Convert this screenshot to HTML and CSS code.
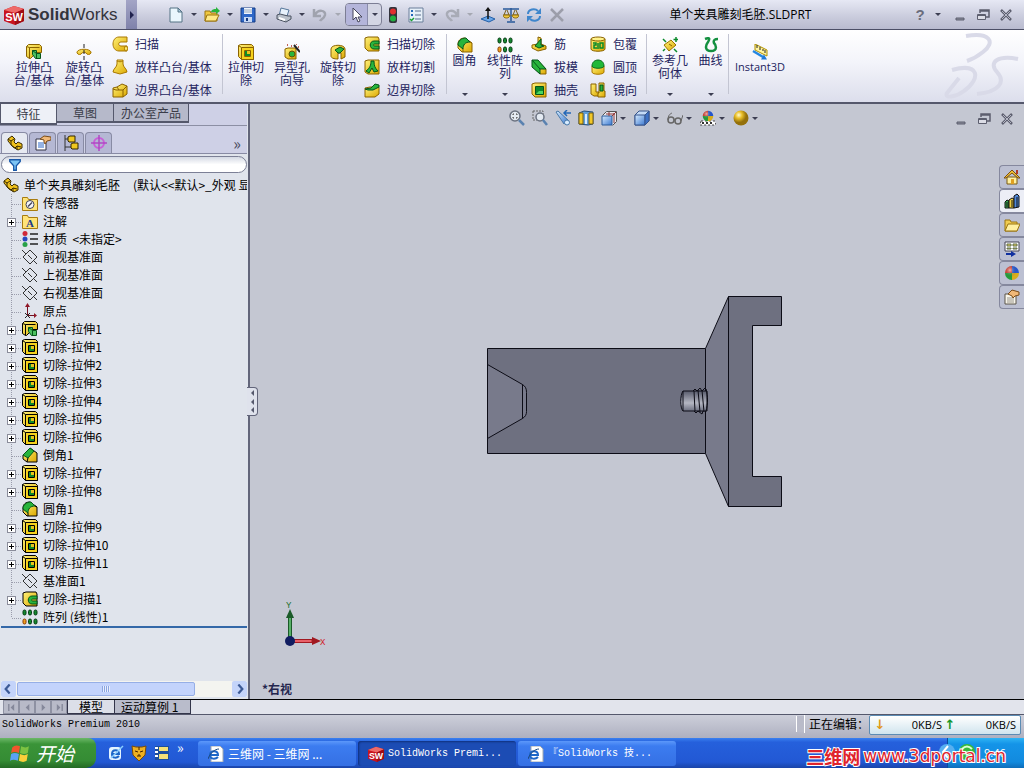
FILE: index.html
```html
<!DOCTYPE html>
<html lang="zh-CN">
<head>
<meta charset="utf-8">
<meta name="viewport" content="width=device-width, initial-scale=1">
<title>SolidWorks - 单个夹具雕刻毛胚.SLDPRT</title>
<link rel="stylesheet" href="styles.css">
</head>
<body>
<svg class="defs" aria-hidden="true">
<defs>
<linearGradient id="gy" x1="0" y1="0" x2="1" y2="1"><stop offset="0" stop-color="#fff27a"/><stop offset="1" stop-color="#dca800"/></linearGradient>
<linearGradient id="gb" x1="0" y1="0" x2="1" y2="1"><stop offset="0" stop-color="#d8ecff"/><stop offset="1" stop-color="#3a78d0"/></linearGradient>
<linearGradient id="gs" x1="0" y1="0" x2="0" y2="1"><stop offset="0" stop-color="#585b6c"/><stop offset=".6" stop-color="#b4b6c2"/><stop offset="1" stop-color="#6c6f80"/></linearGradient>
<radialGradient id="gball" cx=".35" cy=".3"><stop offset="0" stop-color="#fffbd0"/><stop offset=".45" stop-color="#eabf28"/><stop offset="1" stop-color="#94700a"/></radialGradient>
<radialGradient id="gshade" cx=".35" cy=".3"><stop offset="0" stop-color="#fff" stop-opacity=".6"/><stop offset="1" stop-color="#000" stop-opacity=".1"/></radialGradient>
</defs>
<symbol id="boss" viewBox="0 0 16 16"><path d="M.5 2.500l2-2h11l2 2v6h-5l-6 6h-1l-3-2z" fill="url(#gy)" stroke="currentColor"/><path d="M.5 2.500l3 1h10M3.500 3.500v11" fill="none" stroke="currentColor"/><path d="M6.500 6.500h4v3h4v5h-5l-3-4z" fill="#4cc060" stroke="#05551a"/><path d="M10.500 14.500v-5M6.500 6.500l4 3" stroke="#05551a"/></symbol>
<symbol id="cut" viewBox="0 0 16 16"><path d="M.5 1.500l2-1h11l2 2v13h-12l-3-3z" fill="url(#gy)" stroke="currentColor"/><path d="M3.500 3.500h12v12h-12zM.5 1.500l3 2" fill="#f6d21c" stroke="currentColor"/><path d="M6.500 6.500h6v6h-6z" fill="#fff6b0" stroke="currentColor"/><path d="M9 7h3v3H9z" fill="#e8c41c"/><path d="M7 10h5v2H7zM7 7h2v3H7z" fill="#108a28"/></symbol>
<symbol id="revolve" viewBox="0 0 16 16"><path d="M1 9c-1-5 15-5 14 0-1 2-4 2-5 0-1-1-3-1-4 0-1 2-4 2-5 0z" fill="url(#gy)" stroke="#a87700"/><path d="M8 0v4M8 6v4M8 12v4" stroke="#222"/></symbol>
<symbol id="sweep" viewBox="0 0 16 16"><path d="M15 1v5H9c-3 0-3 4 0 4h6v5H7C-1 15-1 1 7 1z" fill="url(#gy)" stroke="#a87700"/><ellipse cx="14" cy="12.500" rx="1.500" ry="2.500" fill="#ffec70" stroke="#a87700"/></symbol>
<symbol id="loft" viewBox="0 0 16 16"><path d="M5 1h6v4c0 3 4 5 4 8l-7 2-7-2c0-3 4-5 4-8z" fill="url(#gy)" stroke="#a87700"/><path d="M5 2c2 1 4 1 6 0" fill="none" stroke="#a87700"/></symbol>
<symbol id="bound" viewBox="0 0 16 16"><path d="M1 6l4-1 5-3 5 2v8l-4 3H1z" fill="url(#gy)" stroke="#8a6200"/><path d="M1 7l3 1h7l4-4M11 8v7M5 5l2 3" fill="none" stroke="#8a6200"/></symbol>
<symbol id="hole" viewBox="0 0 16 16"><path d="M1 5l3-1h8v11H4l-3-2z" fill="url(#gy)" stroke="#8a6200"/><circle cx="8" cy="10" r="3" fill="#28b43c" stroke="#6a5000"/><path d="M10 1l6 7" stroke="#222" stroke-width="2"/><path d="M3 1h1M7 2h1M12 0h1M14 3h1" stroke="#b03020" stroke-width="1.500"/></symbol>
<symbol id="revcut" viewBox="0 0 16 16"><path d="M1 5c0-5 14-5 14 0v8l-4 2V9H8v6c-4 0-7-1-7-3z" fill="url(#gy)" stroke="#8a6200"/><path d="M5 6l5-3 4 2-4 4-2 0z" fill="#28b43c" stroke="#05551a"/></symbol>
<symbol id="sweepcut" viewBox="0 0 16 16"><path d="M1 2l3-1h10l1 2v12H4l-3-3z" fill="url(#gy)" stroke="currentColor"/><path d="M15 5h-5c-5 0-5 8 0 8h5v-3h-4c-2 0-2-2 0-2h4z" fill="#28b43c" stroke="#05551a"/></symbol>
<symbol id="loftcut" viewBox="0 0 16 16"><path d="M1 2l3-1h11v14H4l-3-2z" fill="url(#gy)" stroke="#8a6200"/><path d="M7 2h3c0 5 1 7 4 10l-4 1-2-4-3 5-3-2c4-3 5-6 5-10z" fill="#28b43c" stroke="#05551a"/></symbol>
<symbol id="boundcut" viewBox="0 0 16 16"><path d="M1 6l5-1h9v7l-4 3H1z" fill="url(#gy)" stroke="#8a6200"/><path d="M1 7l6-1 4-4 4 1v2l-6 3H4z" fill="#28b43c" stroke="#05551a"/></symbol>
<symbol id="fillet" viewBox="0 0 16 16"><path d="M1 7c0-4 3-6 7-6l7 5v9H5l-4-4z" fill="url(#gy)" stroke="currentColor"/><path d="M1 8c0-4 3-7 8-7l4 4C8 5 6 8 6 12z" fill="#28b43c" stroke="#05551a"/><path d="M6 12v3M13 5l2 1" stroke="currentColor"/></symbol>
<symbol id="chamfer" viewBox="0 0 16 16"><path d="M1 8l7-7 7 5v9H5l-4-3z" fill="url(#gy)" stroke="currentColor"/><path d="M1 8l7-7 4 3-6 7z" fill="#28b43c" stroke="#05551a"/><path d="M6 11l-1 4" stroke="currentColor"/></symbol>
<symbol id="pattern" viewBox="0 0 16 16"><g fill="#148a30" stroke="#053a12"><rect x="1" y="1" width="3" height="5" rx="1.500"/><rect x="6.500" y="1" width="3" height="5" rx="1.500"/><rect x="12" y="1" width="3" height="5" rx="1.500"/><rect x="6.500" y="10" width="3" height="5" rx="1.500"/><rect x="12" y="10" width="3" height="5" rx="1.500"/></g><rect x="1" y="10" width="3" height="5" rx="1.500" fill="#f0a020" stroke="#8a3a00"/></symbol>
<symbol id="rib" viewBox="0 0 16 16"><path d="M1 9l6-1V1l3 1v6l5 2v3l-8 2-6-3z" fill="url(#gy)" stroke="#8a6200"/><path d="M4 10l6-7v6l3 1-5 2z" fill="#28b43c" stroke="#05551a"/></symbol>
<symbol id="draft" viewBox="0 0 16 16"><path d="M8 3l7 7v5H9l-4-4z" fill="url(#gy)" stroke="#8a6200"/><path d="M1 1h6l8 9H9v5L1 8z" fill="#28b43c" stroke="#05551a"/><path d="M1 1l8 9" stroke="#05551a"/></symbol>
<symbol id="shell" viewBox="0 0 16 16"><path d="M1 2l3-1h11v14H4l-3-3z" fill="url(#gy)" stroke="#8a6200"/><path d="M4.500 4.500h8v8h-8z" fill="#0b8a2c" stroke="#05551a"/><path d="M5 12l3-3h4v3z" fill="#4ad860"/></symbol>
<symbol id="wrap" viewBox="0 0 16 16"><path d="M1 3v10c0 3 14 3 14 0V3z" fill="url(#gy)" stroke="#8a6200"/><ellipse cx="8" cy="3" rx="7" ry="2" fill="#fff28a" stroke="#8a6200"/><path d="M3 7h3v2H4v3h3M8 13V7M10 7h3v5h-3z" fill="none" stroke="#0a8a2a" stroke-width="1.500"/></symbol>
<symbol id="dome" viewBox="0 0 16 16"><path d="M2 7v6c0 3 12 3 12 0V7z" fill="url(#gy)" stroke="#a87700"/><path d="M2 7c0-8 12-8 12 0 0 3-12 3-12 0z" fill="#22b838" stroke="#0a6a1e"/></symbol>
<symbol id="mirror" viewBox="0 0 16 16"><path d="M1 2h5v8h3v4H4l-3-2z" fill="url(#gy)" stroke="#8a6200"/><path d="M9 1h5v8h1v6H8v-4h1z" fill="url(#gy)" stroke="#8a6200"/><path d="M10 3h3v6h-3z" fill="#28b43c" stroke="#05551a"/></symbol>
<symbol id="refgeo" viewBox="0 0 16 16"><path d="M2 8l7-5 5 5-7 6z" fill="url(#gy)" stroke="#9a7400"/><path d="M1 2l3 3M14 0v5M11.500 2.500h5M15 15l-3-3M1 14l2-2" stroke="#0a8a2a" stroke-width="1.500"/><path d="M7 7l3 2" stroke="#8a6200"/></symbol>
<symbol id="curve" viewBox="0 0 16 16"><path d="M2 2c5-2 5 0 3 3-3 4-3 9 3 9 7 0 5-6 3-8-1-3 1-4 4-4" fill="none" stroke="#149040" stroke-width="2.500"/></symbol>
<symbol id="instant" viewBox="0 0 16 16"><path d="M3 0l12 6v6L3 6z" fill="#fff4a0" stroke="#b09000"/><path d="M5 1v3M8 3v3M11 5v2M13 6v3" stroke="#222"/><path d="M1 7l10 6" stroke="#2486e0" stroke-width="2.500"/><path d="M15 15.500l-6 0 3-5z" fill="#1e78d8"/></symbol>
<symbol id="new" viewBox="0 0 16 16"><path d="M2 1h8l4 4v10H2z" fill="#eaf6fd" stroke="#557284"/><path d="M10 1v4h4z" fill="#a7c8dc" stroke="#557284"/></symbol>
<symbol id="open" viewBox="0 0 16 16"><path d="M1 4h5l1 2h6v8H1z" fill="#f0c840" stroke="#9a7410"/><path d="M3 8h12l-3 6H1z" fill="#ffe986" stroke="#9a7410"/><path d="M7 5c1-3 3-3 5-3V0l4 4-4 3V5c-2 0-3 0-5 0z" fill="#28b43c"/></symbol>
<symbol id="save" viewBox="0 0 16 16"><path d="M1 1h14v14H1z" fill="#2f68c8" stroke="#143c86"/><path d="M4 1h8v6H4z" fill="#eef4ff"/><path d="M4 10h8v5H4z" fill="#c6d8f4"/><path d="M6 11h2v3H6z" fill="#163a80"/><path d="M4 3h8M4 5h8" stroke="#9ab"/></symbol>
<symbol id="print" viewBox="0 0 16 16"><path d="M5 1l8 2-2 6H3z" fill="#e8f2fc" stroke="#56779a"/><path d="M1 8l3-1 8 2 3 0v3l-5 3-9-3z" fill="#b9c0ca" stroke="#4a5260"/><path d="M3 11l6 2" stroke="#fff" stroke-width="2"/></symbol>
<symbol id="undo" viewBox="0 0 16 16"><path d="M3 8c3-6 11-5 10 0-1 4-4 4-5 6M2 2v7h7" fill="none" stroke="#a0a3ae" stroke-width="2.500"/></symbol>
<symbol id="redo" viewBox="0 0 16 16"><path d="M13 8C10 2 2 3 3 8c1 4 4 4 5 6M14 2v7H7" fill="none" stroke="#a8abb6" stroke-width="2.500"/></symbol>
<symbol id="arrow" viewBox="0 0 16 16"><path d="M4 1v12l3-3 2 5 2-1-2-4h4z" fill="#fff" stroke="#45455a"/></symbol>
<symbol id="light" viewBox="0 0 16 16"><rect x="4" y="0" width="8" height="16" rx="2" fill="#33333b"/><circle cx="8" cy="4.500" r="3" fill="#e03030"/><circle cx="8" cy="11.500" r="3" fill="#20b040"/></symbol>
<symbol id="list" viewBox="0 0 16 16"><path d="M1 1h14v14H1z" fill="#e6eff8" stroke="#6a7e9a"/><path d="M7 4h6M7 8h6M7 12h6" stroke="#5a7090"/><path d="M3 4h2M3 8h2" stroke="#2468b8" stroke-width="2"/><path d="M2 12l1.500 1.500L6 11" fill="none" stroke="#18a030" stroke-width="1.500"/></symbol>
<symbol id="origin" viewBox="0 0 16 16"><path d="M1 12l7-3 7 3-6 3z" fill="#6aa6e8" stroke="#2460a8"/><path d="M8 12V2" stroke="#111" stroke-width="1.500"/><path d="M8 0l3 4H5z" fill="#111"/></symbol>
<symbol id="scale" viewBox="0 0 16 16"><path d="M0 2h16M8 1v13M4 15h8" stroke="#2a5a9a" stroke-width="1.500"/><path d="M3 3L1 8h5L4 3M12 3l-2 5h5l-2-5" fill="none" stroke="#7a6020"/><path d="M0 8h7c0 4-7 4-7 0zM9 8h7c0 4-7 4-7 0z" fill="#f2c83a" stroke="#8a6a10"/></symbol>
<symbol id="rebuild" viewBox="0 0 16 16"><path d="M2 7c0-5 7-6 10-3M14 9c0 5-7 6-10 3" fill="none" stroke="#3f86cc" stroke-width="2"/><path d="M15 1v6H9zM1 15V9h6z" fill="#3f86cc"/></symbol>
<symbol id="x" viewBox="0 0 16 16"><path d="M2 2l12 12M14 2L2 14" stroke="currentColor" stroke-width="2.500"/></symbol>
<symbol id="wmin" viewBox="0 0 16 16"><path d="M4 11h8v2H4z" fill="#8a8c9a" stroke="#5c5e6e"/></symbol>
<symbol id="wrest" viewBox="0 0 16 16"><path d="M5 6V3h9v7h-3M5 4h9" fill="none" stroke="#5c5e6e" stroke-width="1.500"/><path d="M2.500 7.500h8v5h-8zM2 8.500h9" fill="#dcdde6" stroke="#5c5e6e"/></symbol>
<symbol id="wx" viewBox="0 0 16 16"><path d="M3 3l10 10M13 3L3 13" stroke="#5c5e6e" stroke-width="2.500"/><path d="M4 4l8 8M12 4l-8 8" stroke="#b4b6c4"/></symbol>
<symbol id="part" viewBox="0 0 16 16"><path d="M1 4l4-3 3 3-1 3 2 2 2-2 4 2v4l-4 2-5-3-5-6z" fill="#eec01c" stroke="#3c2c00"/><path d="M1 4l3 2 3-2M4 6v4l4 3 2-2 4 1M10 11v4" fill="none" stroke="#3c2c00"/></symbol>
<symbol id="props" viewBox="0 0 16 16"><path d="M1 4h10v11H1z" fill="#fff" stroke="#334"/><path d="M3 8h6M3 10h6M3 12h6" stroke="#2a66c8"/><path d="M5 4l4-3 7 1v3l-4 1-2 3-1-2 0-2z" fill="#f0b878" stroke="#7a4c18"/></symbol>
<symbol id="custom" viewBox="0 0 16 16"><path d="M1 5h11v10H1z" fill="#f8f6ec" stroke="#5a5448"/><path d="M3 9h7M3 11h7M3 13h7" stroke="#9a968c"/><path d="M4 5l4-4 7 2v3l-4 1-2 2-1-2z" fill="#f0b878" stroke="#7a4c18"/></symbol>
<symbol id="config" viewBox="0 0 16 16"><path d="M2 0v16M2 4h4M2 12h7" stroke="#333"/><path d="M5 2l2-1h5v6H6L5 6zM8 9l2-1h5v6H9l-1-1z" fill="#f0c820" stroke="#332600"/></symbol>
<symbol id="target" viewBox="0 0 16 16"><circle cx="8" cy="8" r="5" fill="none" stroke="#c860d8" stroke-width="2"/><path d="M8 0v16M0 8h16" stroke="#b048c4" stroke-width="1.500"/></symbol>
<symbol id="funnel" viewBox="0 0 16 16"><path d="M2 2h12v2L9.500 9v5h-3V9L2 4z" fill="#7cc4f4" stroke="#1858a8" stroke-width="1.500"/></symbol>
<symbol id="sensor" viewBox="0 0 16 16"><path d="M.5 2.500h5l1 2h9v11H.500z" fill="#ffe478" stroke="#a87c10"/><circle cx="8" cy="9.500" r="4" fill="#f4f6fa" stroke="#445"/><path d="M6 11.500l4-4" stroke="#445" stroke-width="1.500"/></symbol>
<symbol id="note" viewBox="0 0 16 16"><path d="M.5 2.500h5l1 2h9v11H.500z" fill="#ffe478" stroke="#a87c10"/><text x="8" y="14" class="glyph-a">A</text></symbol>
<symbol id="material" viewBox="0 0 16 16"><circle cx="3" cy="2.500" r="2.500" fill="#d02838"/><circle cx="3" cy="8" r="2.500" fill="#2848c0"/><circle cx="3" cy="13.500" r="2.500" fill="#28a048"/><path d="M8 3h8M8 8h8M8 13h8" stroke="#222" stroke-width="1.500"/></symbol>
<symbol id="plane" viewBox="0 0 16 16"><path d="M1 8l7-7 7 7-7 7zM0 1l4 4M12 12l3 3M6 6l4 4" fill="none" stroke="#333"/></symbol>
<symbol id="orig" viewBox="0 0 16 16"><path d="M5.500 12V3M5 12.500h8" stroke="#701020" fill="none"/><path d="M3 10l5 5M8 10l-5 5" stroke="#222"/><path d="M5.500 0l2.500 4H3zM15 12.500L12 10v5z" fill="#901828"/></symbol>
<symbol id="house" viewBox="0 0 16 16"><path d="M3 8h10v7H3z" fill="#fff0a0" stroke="#7a5a10"/><path d="M0 9l8-8 8 8-2 0-6-5-6 5z" fill="#f4c238" stroke="#7a5010"/><path d="M7 10h3v5H7z" fill="#e0a020"/><path d="M12 1h2v4h-2z" fill="#b03828"/></symbol>
<symbol id="books" viewBox="0 0 16 16"><path d="M1 9l2-2 2 1v7H1z" fill="#38a850" stroke="#111"/><path d="M5 7l3-2 2 1v9H5z" fill="#f0d040" stroke="#111"/><path d="M10 3l3-2 2 2v11l-5 1z" fill="#5088d8" stroke="#111"/><path d="M3 9v5M8 7v7M13 4v10" stroke="#111"/></symbol>
<symbol id="folder" viewBox="0 0 16 16"><path d="M1 3h5l1 2h6v9H1z" fill="#f0cc50" stroke="#9a7410"/><path d="M4 7h12l-3 7H1z" fill="#fff0a0" stroke="#9a7410"/></symbol>
<symbol id="palette" viewBox="0 0 16 16"><path d="M1 1h14v9H1z" fill="#fff" stroke="#445"/><path d="M3 3h4v2H3zM9 3h4v2H9zM3 7h4v1H3zM9 7h4v1H9z" fill="#f0d860" stroke="#5a6a4a"/><path d="M2 13h6" stroke="#1030a0" stroke-width="2"/><path d="M7 10l5 3-5 3z" fill="#1030a0"/></symbol>
<symbol id="rgb" viewBox="0 0 16 16"><path d="M8 8V1a7 7 0 0 1 7 7z" fill="#2860e8"/><path d="M8 8h7a7 7 0 0 1-7 7z" fill="#f0c020"/><path d="M8 8v7a7 7 0 0 1-7-7z" fill="#28b040"/><path d="M8 8H1a7 7 0 0 1 7-7z" fill="#f03828"/><circle cx="8" cy="8" r="7" fill="url(#gshade)"/></symbol>
<symbol id="scene" viewBox="0 0 16 16"><path d="M1 11h14l1 4H0z" fill="#fff" stroke="#444" stroke-dasharray="2 2"/><path d="M2 13h12" stroke="#333" stroke-width="2" stroke-dasharray="2 2"/><use href="#rgb" x="2" y="0" width="12" height="12"/></symbol>
<symbol id="ball" viewBox="0 0 16 16"><circle cx="8" cy="8" r="7.500" fill="url(#gball)"/></symbol>
<symbol id="zoomfit" viewBox="0 0 16 16"><circle cx="6" cy="6" r="5" fill="#e4eaf2" stroke="#6b7280" stroke-width="1.500"/><path d="M4 5V4h1M7 4h1v1M4 7v1h1M7 8h1V7" stroke="#444" fill="none"/><path d="M10 10l5 5" stroke="#5a82b0" stroke-width="2.500"/></symbol>
<symbol id="zoomarea" viewBox="0 0 16 16"><path d="M1 1h10v9H1z" fill="none" stroke="#666" stroke-dasharray="2 1"/><circle cx="8" cy="7" r="4" fill="#e4eaf2" stroke="#6b7280" stroke-width="1.500"/><path d="M11 10l4 5" stroke="#5a82b0" stroke-width="2.500"/></symbol>
<symbol id="prev" viewBox="0 0 16 16"><path d="M1 2l2-1 10 9-4 4z" fill="url(#gb)" stroke="#4878a8"/><circle cx="12" cy="12.500" r="2.500" fill="#d8ecff" stroke="#4878a8"/><path d="M16 3h-6M12 0L9 3l3 3" fill="none" stroke="#2468b8" stroke-width="1.500"/></symbol>
<symbol id="section" viewBox="0 0 16 16"><path d="M1 3l5-2 9 1v12l-5 1-9-1z" fill="#5e9ed8" stroke="#27517c"/><path d="M1 3h4v11H1zM11 3h4v11h-4z" fill="#f2c828" stroke="#7a6010"/><path d="M7 4h2v10H7z" fill="#d8ecff"/></symbol>
<symbol id="views" viewBox="0 0 16 16"><path d="M1.500 5.500l4-4h10v10l-4 4" fill="#e6e8ee" stroke="#555"/><path d="M1 6h10v9H1z" fill="url(#gb)" stroke="#2a5a9a"/><path d="M11 6l4-4M8 2v4M5 4h9M13 3v10" stroke="#903838"/></symbol>
<symbol id="cube" viewBox="0 0 16 16"><path d="M1 5l4-4h10v10l-4 4H1z" fill="#c4daf6" stroke="#36558c"/><path d="M1 5h10v10H1z" fill="url(#gb)" stroke="#36558c"/><path d="M11 5l4-4v10l-4 4z" fill="#3c70c4" stroke="#36558c"/></symbol>
<symbol id="glasses" viewBox="0 0 16 16"><circle cx="4" cy="10" r="3" fill="none" stroke="#666" stroke-width="1.500"/><circle cx="11" cy="11" r="3" fill="none" stroke="#666" stroke-width="1.500"/><path d="M1 10c0-5 2-6 4-7M14 11l2-6M7 10h1" fill="none" stroke="#666"/></symbol>
<symbol id="ie" viewBox="0 0 16 16"><path d="M3 0h9l3 3v13H3z" fill="#fff" stroke="#a0a8b0"/><path d="M2 9h8c0-5-8-5-8 0s6 4 8 2" fill="none" stroke="#1c66c8" stroke-width="2"/><path d="M0 13C2 7 7 3 11 3" fill="none" stroke="#1c4880"/></symbol>
<symbol id="ie2" viewBox="0 0 16 16"><rect x="1" y="2" width="12" height="13" rx="3" fill="#e4f4ff"/><path d="M4 9h7c0-5-7-5-7 0s5 4 7 2" fill="none" stroke="#1c66c8" stroke-width="2"/><path d="M3 13L15 1" stroke="#8ad0ff" stroke-width="1.500"/></symbol>
<symbol id="tiger" viewBox="0 0 16 16"><path d="M1 1l4 1h6l4-1-1 9-6 6-6-6z" fill="#eeb022" stroke="#7a4a08"/><path d="M4 6l3 1M12 6L9 7M8 2v3M6 11h4M8 9v2" stroke="#402000"/></symbol>
<symbol id="desk" viewBox="0 0 16 16"><path d="M1 1h14v14H1z" fill="#1c4e9c"/><path d="M5 2h9v4H5zM5 9h9v5H5z" fill="#f4e078"/><path d="M1 3h3M1 7h3M1 11h3" stroke="#fff" stroke-width="2"/></symbol>
<symbol id="flag" viewBox="0 0 18 16"><path d="M2 3q3-3 7-1L8 8Q4 6 1 8z" fill="#f0562c"/><path d="M10 2q4 2 7 0l-1 6q-3 2-7 0z" fill="#7cc242"/><path d="M1 9q3-2 7 0l-1 6q-4-2-7 0z" fill="#5aa2f4"/><path d="M9 9q4 2 7 0l-1 6q-3 2-7 0z" fill="#fbcf3a"/></symbol>
<symbol id="sw" viewBox="0 0 20 20"><path d="M0 5l10-4 10 3v12l-9 4-11-4z" fill="#c8141e"/><path d="M0 5l10-4 10 3-9 4z" fill="#ee6a68"/><path d="M11 8l9-4v12l-9 4z" fill="#a00c16"/><text x="10" y="16" class="glyph-sw">SW</text></symbol>
</svg>

<header class="titlebar">
  <div class="brand"><svg class="brand-mark"><use href="#sw"/></svg><span><b>Solid</b>Works</span></div>
  <button class="brand-menu" aria-label="菜单"><i class="tri-right"></i></button>
  <nav class="quick" aria-label="标准">
    <button aria-label="新建"><svg class="ic"><use href="#new"/></svg></button><button class="dd" aria-label="新建选项"></button>
    <button aria-label="打开"><svg class="ic"><use href="#open"/></svg></button><button class="dd" aria-label="打开选项"></button>
    <button aria-label="保存"><svg class="ic"><use href="#save"/></svg></button><button class="dd" aria-label="保存选项"></button>
    <button aria-label="打印"><svg class="ic"><use href="#print"/></svg></button><button class="dd" aria-label="打印选项"></button>
    <button aria-label="撤销" disabled><svg class="ic"><use href="#undo"/></svg></button><button class="dd dim" aria-label="撤销选项"></button>
    <span class="picker"><button class="pick" aria-label="选择"><svg class="ic"><use href="#arrow"/></svg></button><button class="dd" aria-label="选择选项"></button></span>
    <button class="spaced" aria-label="重建模型"><svg class="ic"><use href="#light"/></svg></button>
    <button class="spaced" aria-label="选项"><svg class="ic"><use href="#list"/></svg></button><button class="dd" aria-label="更多选项"></button>
    <button aria-label="重做" disabled><svg class="ic"><use href="#redo"/></svg></button><button class="dd dim" aria-label="重做选项"></button>
    <button aria-label="原点"><svg class="ic"><use href="#origin"/></svg></button>
    <button class="spaced" aria-label="测量"><svg class="ic"><use href="#scale"/></svg></button>
    <button class="spaced" aria-label="刷新"><svg class="ic"><use href="#rebuild"/></svg></button>
    <button class="spaced gray" aria-label="取消"><svg class="ic"><use href="#x"/></svg></button>
  </nav>
  <h1 class="doc">单个夹具雕刻毛胚.SLDPRT</h1>
  <div class="wctl">
    <button class="help" aria-label="帮助">?</button><button class="dd" aria-label="帮助选项"></button>
    <button aria-label="最小化"><svg class="ic"><use href="#wmin"/></svg></button>
    <button aria-label="还原"><svg class="ic"><use href="#wrest"/></svg></button>
    <button aria-label="关闭"><svg class="ic"><use href="#wx"/></svg></button>
  </div>
</header>

<section class="ribbon" aria-label="特征工具">
  <div class="group g1">
    <button class="big wide low"><svg class="ic"><use href="#boss"/></svg><span>拉伸凸<br>台/基体</span></button>
    <button class="big wide low"><svg class="ic"><use href="#revolve"/></svg><span>旋转凸<br>台/基体</span></button>
    <div class="stack s1">
      <button><svg class="ic"><use href="#sweep"/></svg>扫描</button>
      <button><svg class="ic"><use href="#loft"/></svg>放样凸台/基体</button>
      <button><svg class="ic"><use href="#bound"/></svg>边界凸台/基体</button>
    </div>
  </div>
  <div class="group">
    <button class="big low"><svg class="ic"><use href="#cut"/></svg><span>拉伸切<br>除</span></button>
    <button class="big low"><svg class="ic"><use href="#hole"/></svg><span>异型孔<br>向导</span></button>
    <button class="big low"><svg class="ic"><use href="#revcut"/></svg><span>旋转切<br>除</span></button>
    <div class="stack s2">
      <button><svg class="ic"><use href="#sweepcut"/></svg>扫描切除</button>
      <button><svg class="ic"><use href="#loftcut"/></svg>放样切割</button>
      <button><svg class="ic"><use href="#boundcut"/></svg>边界切除</button>
    </div>
  </div>
  <div class="group">
    <button class="big slim"><svg class="ic"><use href="#fillet"/></svg><span>圆角</span><i class="tri"></i></button>
    <button class="big"><svg class="ic"><use href="#pattern"/></svg><span>线性阵<br>列</span><i class="tri"></i></button>
    <div class="stack s3">
      <button><svg class="ic"><use href="#rib"/></svg>筋</button>
      <button><svg class="ic"><use href="#draft"/></svg>拔模</button>
      <button><svg class="ic"><use href="#shell"/></svg>抽壳</button>
    </div>
    <div class="stack s3">
      <button><svg class="ic"><use href="#wrap"/></svg>包覆</button>
      <button><svg class="ic"><use href="#dome"/></svg>圆顶</button>
      <button><svg class="ic"><use href="#mirror"/></svg>镜向</button>
    </div>
  </div>
  <div class="group">
    <button class="big"><svg class="ic"><use href="#refgeo"/></svg><span>参考几<br>何体</span><i class="tri"></i></button>
    <button class="big slim"><svg class="ic"><use href="#curve"/></svg><span>曲线</span><i class="tri"></i></button>
  </div>
  <div class="group last">
    <button class="big instant low"><svg class="ic"><use href="#instant"/></svg><span>Instant3D</span></button>
  </div>
  <svg class="ds" viewBox="0 0 80 68" aria-hidden="true"><path d="M22 4c24-4 30 6 17 16-5 4-10 7-16 9M8 38c28-8 29 9 12 21-8 6-20 8-17 2l12-15M74 27c-20-4-30 3-21 13s2 20-20 22" fill="none" stroke="#d9dae8" stroke-width="4"/></svg>
</section>

<main class="work">
  <aside class="side">
    <div class="cmdtabs" role="tablist">
      <button class="on" role="tab" aria-selected="true">特征</button><button role="tab">草图</button><button role="tab">办公室产品</button>
    </div>
    <div class="mgr">
      <button class="on" aria-label="设计树"><svg class="ic"><use href="#part"/></svg></button>
      <button aria-label="属性"><svg class="ic"><use href="#props"/></svg></button>
      <button aria-label="配置"><svg class="ic"><use href="#config"/></svg></button>
      <button aria-label="尺寸专家"><svg class="ic"><use href="#target"/></svg></button>
      <button class="more" aria-label="更多">»</button>
    </div>
    <label class="filter"><svg class="ic"><use href="#funnel"/></svg><input type="text" aria-label="过滤"></label>
    <div class="root"><svg class="ic"><use href="#part"/></svg><span>单个夹具雕刻毛胚</span><span class="cfg">(默认&lt;&lt;默认&gt;_外观 显</span></div>
    <ul class="tree">
      <li><svg class="ic"><use href="#sensor"/></svg>传感器</li>
      <li><button aria-label="展开"></button><svg class="ic"><use href="#note"/></svg>注解</li>
      <li><svg class="ic"><use href="#material"/></svg>材质 &nbsp;&lt;未指定&gt;</li>
      <li><svg class="ic"><use href="#plane"/></svg>前视基准面</li>
      <li><svg class="ic"><use href="#plane"/></svg>上视基准面</li>
      <li><svg class="ic"><use href="#plane"/></svg>右视基准面</li>
      <li><svg class="ic"><use href="#orig"/></svg>原点</li>
      <li><button aria-label="展开"></button><svg class="ic"><use href="#boss"/></svg>凸台-拉伸1</li>
      <li><button aria-label="展开"></button><svg class="ic"><use href="#cut"/></svg>切除-拉伸1</li>
      <li><button aria-label="展开"></button><svg class="ic"><use href="#cut"/></svg>切除-拉伸2</li>
      <li><button aria-label="展开"></button><svg class="ic"><use href="#cut"/></svg>切除-拉伸3</li>
      <li><button aria-label="展开"></button><svg class="ic"><use href="#cut"/></svg>切除-拉伸4</li>
      <li><button aria-label="展开"></button><svg class="ic"><use href="#cut"/></svg>切除-拉伸5</li>
      <li><button aria-label="展开"></button><svg class="ic"><use href="#cut"/></svg>切除-拉伸6</li>
      <li><svg class="ic"><use href="#chamfer"/></svg>倒角1</li>
      <li><button aria-label="展开"></button><svg class="ic"><use href="#cut"/></svg>切除-拉伸7</li>
      <li><button aria-label="展开"></button><svg class="ic"><use href="#cut"/></svg>切除-拉伸8</li>
      <li><svg class="ic"><use href="#fillet"/></svg>圆角1</li>
      <li><button aria-label="展开"></button><svg class="ic"><use href="#cut"/></svg>切除-拉伸9</li>
      <li><button aria-label="展开"></button><svg class="ic"><use href="#cut"/></svg>切除-拉伸10</li>
      <li><button aria-label="展开"></button><svg class="ic"><use href="#cut"/></svg>切除-拉伸11</li>
      <li><svg class="ic"><use href="#plane"/></svg>基准面1</li>
      <li><button aria-label="展开"></button><svg class="ic"><use href="#sweepcut"/></svg>切除-扫描1</li>
      <li><svg class="ic"><use href="#pattern"/></svg>阵列 (线性)1</li>
    </ul>
    <div class="rollback"></div>
    <div class="hscroll">
      <button aria-label="向左"><svg viewBox="0 0 8 8"><path d="M5 0L1.500 4 5 8" fill="none" stroke="#3c5a96" stroke-width="2"/></svg></button>
      <div class="track"><div class="thumb"><i></i></div></div>
      <button aria-label="向右"><svg viewBox="0 0 8 8"><path d="M3 0l3.500 4L3 8" fill="none" stroke="#3c5a96" stroke-width="2"/></svg></button>
    </div>
    <button class="splitter" aria-label="收起面板"><i></i><i></i><i></i></button>
  </aside>

  <section class="view" aria-label="图形区域">
    <div class="hud">
      <button aria-label="整屏显示"><svg class="ic"><use href="#zoomfit"/></svg></button>
      <button aria-label="局部放大"><svg class="ic"><use href="#zoomarea"/></svg></button>
      <button aria-label="上一视图"><svg class="ic"><use href="#prev"/></svg></button>
      <button aria-label="剖面视图"><svg class="ic"><use href="#section"/></svg></button>
      <button class="menu" aria-label="视图定向"><svg class="ic"><use href="#views"/></svg><i class="tri"></i></button>
      <button class="menu" aria-label="显示样式"><svg class="ic"><use href="#cube"/></svg><i class="tri"></i></button>
      <button class="menu" aria-label="隐藏项目"><svg class="ic"><use href="#glasses"/></svg><i class="tri"></i></button>
      <button class="menu" aria-label="布景"><svg class="ic"><use href="#scene"/></svg><i class="tri"></i></button>
      <button class="menu" aria-label="外观"><svg class="ic"><use href="#ball"/></svg><i class="tri"></i></button>
    </div>
    <div class="docctl">
      <button aria-label="最小化文档"><svg class="ic"><use href="#wmin"/></svg></button>
      <button aria-label="还原文档"><svg class="ic"><use href="#wrest"/></svg></button>
      <button aria-label="关闭文档"><svg class="ic"><use href="#wx"/></svg></button>
    </div>
    <svg class="model" viewBox="0 0 296 212" role="img" aria-label="零件右视图">
      <g stroke="#0c0c16" stroke-linejoin="round">
        <path d="M.5 52.500h218v105H.500z" fill="#6e7080"/>
        <path d="M.5 68.500l35 20v34l-35 20z" fill="#787a8b"/>
        <path d="M35.500 88.500c3 2 4 4 4 8v19c0 3-1 5-4 7z" fill="#787a8b"/>
        <path d="M218.500 52.500l23-52v210l-23-53z" fill="#787a8b"/>
        <path d="M241.500.5h53v29h-29v151h29v30h-53z" fill="#6e7080"/>
        <path d="M196 95h24v20h-24c-3-3-3-16 0-20z" fill="url(#gs)"/>
        <path d="M196 95v20M207 95l1 20M211 94l2 22M215 94l2 22M219 93c2 7 2 15 0 22M206 95l2-2 2 2 3-3 2 3 3-3 1 2M207 115l2 2 2-2 4 3 1-3" fill="none"/>
      </g>
    </svg>
    <svg class="triad" viewBox="0 0 44 50" role="img" aria-label="坐标系">
      <path d="M5.500 14h3v26h-3z" fill="#58b068" stroke="#1a5a28"/><path d="M7 9l4 9H3z" fill="#1a5a28"/>
      <path d="M9 39.500h20v3H9z" fill="#e86068" stroke="#a01820"/><path d="M38 41l-9-4v8z" fill="#a01820"/>
      <circle cx="7" cy="41" r="5" fill="#101c60"/>
      <text x="3" y="8" class="ax ay">Y</text><text x="37" y="45" class="ax axx">X</text>
    </svg>
    <div class="vname">*右视</div>
    <nav class="taskpane" aria-label="任务窗格">
      <button aria-label="资源"><svg class="ic"><use href="#house"/></svg></button>
      <button class="on" aria-label="设计库"><svg class="ic"><use href="#books"/></svg></button>
      <button aria-label="文件探索器"><svg class="ic"><use href="#folder"/></svg></button>
      <button aria-label="视图调色板"><svg class="ic"><use href="#palette"/></svg></button>
      <button aria-label="外观"><svg class="ic"><use href="#rgb"/></svg></button>
      <button aria-label="自定义属性"><svg class="ic"><use href="#custom"/></svg></button>
    </nav>
  </section>
</main>

<div class="sheets">
  <button class="nav" aria-label="第一个"><svg viewBox="0 0 10 10"><path d="M2 1v8" stroke="#85889a" stroke-width="1.500"/><path d="M8 1v8L4 5z" fill="#85889a"/></svg></button>
  <button class="nav" aria-label="上一个"><svg viewBox="0 0 10 10"><path d="M7 1v8L3 5z" fill="#85889a"/></svg></button>
  <button class="nav" aria-label="下一个"><svg viewBox="0 0 10 10"><path d="M3 1v8l4-4z" fill="#85889a"/></svg></button>
  <button class="nav" aria-label="最后一个"><svg viewBox="0 0 10 10"><path d="M8 1v8" stroke="#85889a" stroke-width="1.500"/><path d="M2 1v8l4-4z" fill="#85889a"/></svg></button>
  <button class="sheet on">模型</button><button class="sheet study">运动算例 1</button>
</div>

<footer class="status">
  <span class="mono">SolidWorks Premium 2010</span>
  <span class="edit">正在编辑：</span>
  <div class="net"><b class="dn">↓</b><span>0KB/S</span><b class="up">↑</b><span>0KB/S</span></div>
</footer>

<nav class="taskbar" aria-label="任务栏">
  <button class="start"><svg><use href="#flag"/></svg>开始</button>
  <div class="ql">
    <button aria-label="浏览器"><svg class="ic"><use href="#ie2"/></svg></button>
    <button aria-label="虎"><svg class="ic"><use href="#tiger"/></svg></button>
    <button aria-label="显示桌面"><svg class="ic"><use href="#desk"/></svg></button>
    <button class="chev" aria-label="更多">»</button>
  </div>
  <button class="task"><svg class="ic"><use href="#ie"/></svg><span>三维网 - 三维网 ...</span></button>
  <button class="task on mono"><svg class="ic"><use href="#sw"/></svg><span>SolidWorks Premi...</span></button>
  <button class="task mono"><svg class="ic"><use href="#ie"/></svg><span>『SolidWorks 技...</span></button>
  <div class="tray"><svg viewBox="0 0 40 20" aria-hidden="true"><circle cx="9" cy="9" r="8" fill="#58b0f0"/><path d="M10 3L5 9l5 6" fill="none" stroke="#fff" stroke-width="2"/><circle cx="29" cy="9" r="8" fill="#36b83c"/><path d="M24 6q5-5 10 0" fill="none" stroke="#d8ffd0" stroke-width="2"/></svg><time>9:46</time></div>
  <div class="mark"><b>三维网</b><span>www.3dportal.cn</span></div>
</nav>
</body>
</html>
```

FILE: styles.css
```css
* { box-sizing: border-box; }

body {
  margin: 0;
  min-height: 100vh;
  display: flex;
  flex-direction: column;
  overflow: hidden;
  font: 12px/14px "Noto Sans CJK SC", sans-serif;
  color: #000;
  background: #c4c7d2;
}

button {
  padding: 0;
  border: 0;
  background: none;
  font: inherit;
  color: inherit;
  display: flex;
  align-items: center;
  justify-content: center;
  white-space: nowrap;
}

.defs { position: absolute; width: 0; height: 0; }
.ic { width: 16px; height: 16px; flex: none; display: block; }
.mono { font-family: "Liberation Mono", "Noto Sans CJK SC", monospace; font-size: 10px; }
.glyph-a { font: bold 11px "Liberation Serif", serif; fill: #1c3c8c; text-anchor: middle; }
.glyph-sw { font: bold 11px "Liberation Sans", sans-serif; fill: #fff; text-anchor: middle; }

.tri, .dd::after {
  content: "";
  width: 0;
  height: 0;
  border: 3px solid transparent;
  border-top-color: #3c3e52;
  border-bottom: 0;
}
.dd { width: 20px; align-self: stretch; }
.dim::after { border-top-color: #a5a8b2; }

/* title bar */
.titlebar {
  min-height: 30px;
  display: flex;
  align-items: stretch;
  background: linear-gradient(#e6e8f4, #c9cbdc 60%, #b9bbcf);
  border-bottom: 1px solid #4c4f66;
}
.brand {
  width: 126px;
  display: flex;
  align-items: center;
  gap: 4px;
  padding-left: 4px;
  font: 17px/20px "Liberation Sans", sans-serif;
  color: #34343c;
  background: linear-gradient(#dcdfea, #c0c3d4);
}
.brand-mark { width: 20px; height: 20px; }
.brand-menu { width: 11px; background: linear-gradient(#a3a5c6, #7f82aa); }
.tri-right { border: 4px solid transparent; border-left-color: #20224e; border-right: 0; }
.quick { display: flex; align-items: center; padding-left: 31px; }
.picker {
  display: flex;
  align-self: center;
  height: 23px;
  margin-left: -3px;
  border: 1px solid #7c7e94;
  border-radius: 4px;
  background: #d4d6e4;
}
.picker .dd { width: 13px; }
.pick { width: 22px; background: #b4b5da; border-right: 1px solid #8a8cab; border-radius: 3px 0 0 3px; }
.spaced { margin-left: 7px; }
.picker + .spaced { margin-left: 3px; }
.gray { color: #9c9eaa; }
.doc {
  flex: 1;
  margin: 0;
  padding-left: 4px;
  align-self: center;
  text-align: center;
  white-space: nowrap;
  font: 12px/14px "Open Sans", "Noto Sans CJK SC", sans-serif;
}
.wctl { display: flex; align-items: center; padding-right: 7px; }
.wctl button + button + button { width: 23px; }
.help { width: 16px; font: bold 15px/16px "Liberation Sans", sans-serif; color: #6b6d7c; }

/* ribbon */
.ribbon {
  position: relative;
  min-height: 74px;
  display: flex;
  color: #24245e;
  background: linear-gradient(#fff, #f3f4fa 45%, #dcdeec);
  border-bottom: 2px solid #55586c;
}
.ribbon .ic { color: #8a6200; }
.group { display: flex; position: relative; padding-right: 1px; }
.group::after {
  content: "";
  position: absolute;
  top: 4px;
  bottom: 8px;
  right: 0;
  width: 1px;
  background: #c3c5d2;
}
.group.last::after { display: none; }
.g1 { padding-left: 9px; }
.big {
  width: 46px;
  padding: 7px 0 6px;
  flex-direction: column;
  justify-content: flex-start;
  line-height: 13px;
}
.big.low { padding-top: 14px; }
.big.wide { width: 50px; }
.big.slim { width: 35px; }
.big.instant { width: 62px; font: 11px/14px "Open Sans", sans-serif; }
.big .tri { margin-top: auto; }
.stack { display: grid; grid-template-rows: repeat(3, 23px); padding: 2px 0 0 3px; }
.stack button { justify-content: flex-start; gap: 7px; }
.s1 { width: 113px; }
.s2 { width: 85px; }
.s3 { width: 59px; }
.ds { position: absolute; right: 0; top: 2px; width: 80px; height: 68px; }

/* workspace */
.work { flex: 1; display: flex; min-height: 0; }
.side {
  position: relative;
  flex: none;
  width: 250px;
  display: flex;
  flex-direction: column;
  padding: 0 1px 2px;
  background: #e0e4ec;
  border-right: 2px solid #62657a;
}
.side > .cmdtabs, .side > .mgr { margin: 0 0 0 -1px; background: #ced0e6; }
.cmdtabs { display: flex; align-items: flex-start; height: 22px; border-bottom: 1px solid #8c8fa4; }
.cmdtabs button {
  height: 19px;
  width: 57px;
  border: solid #55586c;
  border-width: 0 1px 2px 0;
  background: #b6b9ca;
  color: #3a3c48;
}
.cmdtabs button + button + button { width: 75px; }
.cmdtabs button.on { height: 21px; background: #eef0f7; border-left-width: 1px; }
.mgr { display: flex; align-items: flex-end; gap: 1px; height: 28px; padding-left: 1px; border-bottom: 1px solid #888ba4; }
.mgr button {
  width: 27px;
  height: 21px;
  border: 1px solid #888ba4;
  border-bottom: 0;
  border-radius: 4px 4px 0 0;
  background: #b5b8d4;
}
.mgr button.on { background: #e6e9f1; }
.mgr .more { margin-left: auto; width: 20px; border: 0; background: none; color: #4a4c60; font-size: 16px; }
.filter {
  display: flex;
  align-items: center;
  height: 17px;
  margin: 2px 0 3px;
  padding-left: 6px;
  border: 1px solid #7c8096;
  border-radius: 9px;
  background: linear-gradient(#d4d9e4, #fff 50%);
}
.filter .ic { width: 14px; height: 14px; }
.filter input { flex: 1; min-width: 0; height: 13px; border: 0; outline: 0; background: none; font: inherit; }
.root { display: flex; align-items: center; gap: 5px; height: 18px; overflow: hidden; white-space: nowrap; padding-left: 2px; }
.root .cfg { margin-left: 8px; }
.tree {
  position: relative;
  list-style: none;
  margin: 0;
  padding: 0;
}
.tree::before {
  content: "";
  position: absolute;
  left: 10px;
  top: 0;
  bottom: 9px;
  border-left: 1px dotted #9a9cab;
}
.tree li {
  position: relative;
  display: flex;
  align-items: center;
  gap: 5px;
  height: 18px;
  padding-left: 21px;
  white-space: nowrap;
}
.tree li::before {
  content: "";
  position: absolute;
  left: 11px;
  top: 10px;
  width: 9px;
  border-top: 1px dotted #9a9cab;
}
.tree button {
  position: absolute;
  left: 6px;
  top: 6px;
  width: 9px;
  height: 9px;
  border: 1px solid #8a8c9a;
  background:
    linear-gradient(#000, #000) center / 5px 1px no-repeat,
    linear-gradient(#000, #000) center / 1px 5px no-repeat,
    #fff;
}
.rollback { height: 2px; background: #3468a8; }
.hscroll { display: flex; height: 16px; margin-top: auto; background: #f4f4f0; }
.hscroll button { width: 15px; border-radius: 2px; background: #c4d4fa; }
.hscroll svg { width: 9px; height: 10px; }
.track { flex: 1; display: flex; padding: 1px; }
.thumb {
  width: 83%;
  display: flex;
  align-items: center;
  justify-content: center;
  border: 1px solid #96aee6;
  border-radius: 2px;
  background: #c3d3fc;
}
.thumb i { width: 8px; height: 6px; background: repeating-linear-gradient(90deg, #8ca6e0 0 1px, #e8eefe 1px 2px); }
.splitter {
  position: absolute;
  right: -10px;
  top: 283px;
  z-index: 1;
  width: 11px;
  height: 29px;
  flex-direction: column;
  justify-content: space-evenly;
  border: 1px solid #62657a;
  border-left: 0;
  border-radius: 0 4px 4px 0;
  background: #dfe2ec;
}
.splitter i { border: 3px solid transparent; border-right-color: #55586c; border-left: 0; }

.view { position: relative; flex: 1; background: #c4c7d2; }
.hud { position: absolute; left: 259px; top: 6px; display: flex; gap: 7px; }
.menu { gap: 3px; }
.menu + .menu { margin-left: 1px; }
.docctl { position: absolute; right: 9px; top: 7px; display: flex; gap: 7px; }
.model { position: absolute; left: 237px; top: 192px; width: 296px; height: 212px; }
.triad { position: absolute; left: 33px; bottom: 49px; width: 44px; height: 50px; }
.ax { font: 9px "Liberation Mono", monospace; }
.ay { fill: #1c7030; }
.axx { fill: #d02028; }
.vname { position: absolute; left: 12px; bottom: 3px; font-weight: bold; color: #24264e; }
.taskpane { position: absolute; right: 0; top: 61px; }
.taskpane button {
  width: 25px;
  height: 24px;
  border: 1px solid #85889e;
  border-right: 0;
  border-radius: 4px 0 0 4px;
  background: #bcc0d2;
}
.taskpane .on { background: #eceef6; }

/* sheet tabs */
.sheets { display: flex; min-height: 16px; padding-left: 3px; background: #e2e4ec; border-top: 1px solid #000; border-bottom: 1px solid #55586c; }
.nav { width: 16px; height: 14px; border: 1px solid #8e91a2; background: #b8bac8; }
.nav svg { width: 9px; height: 9px; }
.sheet { height: 14px; padding: 0 11px; border: solid #33354a; border-width: 0 1px 1px; background: #dcdfe8; }
.study { padding: 0 12px 0 6px; background: #b9bccb; border-left: 0; }

/* status bar */
.status { display: flex; align-items: center; min-height: 23px; padding: 0 3px 0 2px; background: linear-gradient(#cdcfda, #aeb0c0); }
.status .mono { line-height: 20px; align-self: flex-start; }
.edit {
  align-self: flex-start;
  line-height: 18px;
  margin-left: auto;
  padding-left: 4px;
  border-left: 1px solid #fff;
  white-space: nowrap;
  box-shadow: -8px 0 0 -1px #b9bbc9, -9px 0 0 -1px #fff;
}
.net {
  display: grid;
  grid-template-columns: 12px 56px 16px 58px;
  align-items: center;
  align-self: flex-start;
  height: 20px;
  padding: 0 4px;
  border: 1px solid #5c8cb4;
  border-radius: 2px;
  background: linear-gradient(#fff, #d0e4ee);
  font: 11px/14px "Open Sans", sans-serif;
  text-align: right;
}
.net b { font: bold 13px/14px "DejaVu Sans", sans-serif; text-align: center; }
.dn { color: #e09a18; }
.up { color: #18982c; }

/* taskbar */
.taskbar {
  position: relative;
  display: flex;
  align-items: stretch;
  gap: 2px;
  min-height: 30px;
  color: #fff;
  background: linear-gradient(#3a80f0, #2560dc 14%, #2258d4 80%, #1a44a8);
}
.start {
  width: 96px;
  gap: 6px;
  padding-right: 12px;
  border-radius: 0 8px 10px 0;
  background: linear-gradient(#6cb868, #3a9438 20%, #358c34 75%, #246a24);
  font-size: 19px;
  font-style: italic;
}
.start svg { width: 20px; height: 18px; }
.ql { display: flex; align-items: center; gap: 7px; width: 98px; padding-left: 10px; }
.chev { align-self: flex-start; font-size: 14px; margin-top: 2px; }
.task {
  flex: 0 1 158px;
  justify-content: flex-start;
  gap: 4px;
  margin: 3px 0 2px;
  padding-left: 10px;
  border-radius: 3px;
  background: linear-gradient(#5c98fa, #3c7cf0 20%, #3570e4);
}
.task.on { background: #1c4cb4; box-shadow: inset 1px 1px 2px #10307c; }
.tray {
  width: 77px;
  margin-left: auto;
  display: flex;
  align-items: center;
  background: linear-gradient(#2fb4f4, #1494e8 20%, #128ade 80%, #0e6cb8);
  border-left: 1px solid #0c4c9c;
}
.tray svg { width: 40px; height: 20px; margin-left: -10px; }
.tray time { margin-left: 6px; font: 11px/14px "Open Sans", sans-serif; }
.mark {
  position: absolute;
  right: 18px;
  bottom: 0;
  display: flex;
  align-items: center;
  gap: 3px;
  font: 17px/24px "DejaVu Sans", sans-serif;
  color: #e0242c;
  -webkit-text-stroke: 2px #fff;
  paint-order: stroke fill;
}
.mark b { font: bold 18px/24px "Noto Sans CJK SC", sans-serif; }
```
